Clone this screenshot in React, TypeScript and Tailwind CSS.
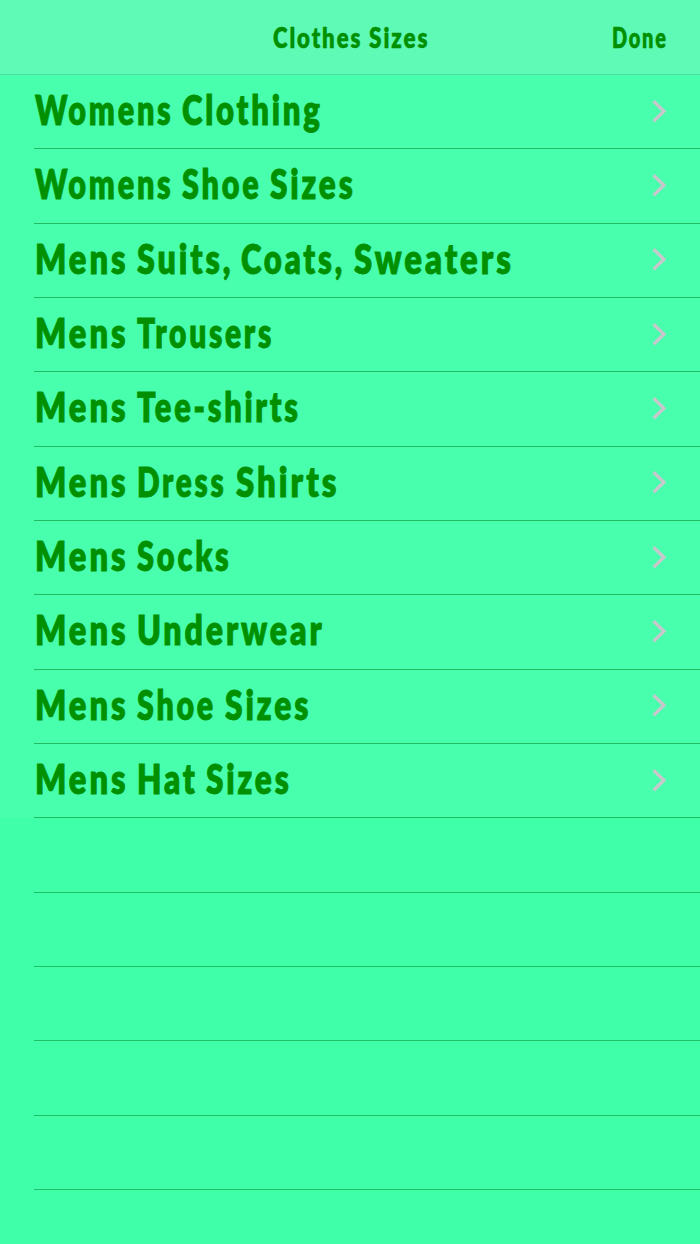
import { useLayoutEffect, useRef } from "react";

type WordBox = [text: string, start: number, end: number];

const rows: WordBox[][] = [
  [["Womens", 34.5, 170.5], ["Clothing", 181.5, 319.5]],
  [["Womens", 34.5, 170.5], ["Shoe", 181.5, 258.5], ["Sizes", 270, 352.5]],
  [["Mens", 34.5, 125.5], ["Suits,", 136.5, 230], ["Coats,", 240.5, 342], ["Sweaters", 354, 510.5]],
  [["Mens", 34.5, 125.5], ["Trousers", 137, 271]],
  [["Mens", 34.5, 125.5], ["Tee-shirts", 137, 298]],
  [["Mens", 34.5, 125.5], ["Dress", 136.5, 223.5], ["Shirts", 235.5, 336]],
  [["Mens", 34.5, 125.5], ["Socks", 137, 228.5]],
  [["Mens", 34.5, 125.5], ["Underwear", 136.5, 321.5]],
  [["Mens", 34.5, 125.5], ["Shoe", 137, 213.5], ["Sizes", 225, 308]],
  [["Mens", 34.5, 125.5], ["Hat", 136.5, 194.5], ["Sizes", 206, 288.5]],
];

const emptyRows = [0, 1, 2, 3, 4, 5];

// Condenses a word horizontally so that it fills the given width.
function Word({ text, width }: { text: string; width: number }) {
  const ref = useRef<HTMLSpanElement>(null);
  useLayoutEffect(() => {
    const el = ref.current;
    if (!el) return;
    const spacing = parseFloat(getComputedStyle(el).letterSpacing) || 0;
    el.style.transform = `scaleX(${width / (el.offsetWidth - spacing)})`;
  }, [width]);
  return (
    <span className="block shrink-0" style={{ width }}>
      <span ref={ref} className="inline-block origin-left whitespace-nowrap">
        {text}
      </span>
    </span>
  );
}

function Label({ words, origin }: { words: WordBox[]; origin: number }) {
  return (
    <span className="flex whitespace-pre">
      {words.map(([text, start, end], i) => {
        const gap = start - (i === 0 ? origin : words[i - 1][2]);
        return (
          <span key={i} className="flex shrink-0">
            <span className="block overflow-hidden" style={{ width: gap }}>
              {i > 0 ? " " : ""}
            </span>
            <Word text={text} width={end - start} />
          </span>
        );
      })}
    </span>
  );
}

function Chevron() {
  return (
    <svg className="h-6 w-4 shrink-0" viewBox="0 0 16 24" fill="none" stroke="#c7c7cc" strokeWidth="3.3">
      <path d="M2.6 1.2 L12.9 11.2 L2.6 21.2" />
    </svg>
  );
}

export default function App() {
  return (
    <div className="flex h-[1244px] w-[700px] flex-col overflow-hidden bg-[#40ffa9] font-['Marker_Felt','Lato',sans-serif] font-extrabold text-[#009000]">
      <header className="flex h-[75px] shrink-0 items-center justify-between border-b border-[#4cdd98] bg-[#5ffab5] pr-[34px] pl-[273px] text-[29px] leading-[40px] tracking-[2.5px] [-webkit-text-stroke:0.4px_#009000]">
        <h1>
          <Label words={[["Clothes", 273, 360.5], ["Sizes", 369, 427.5]]} origin={273} />
        </h1>
        <button className="block">
          <Label words={[["Done", 612, 666]]} origin={612} />
        </button>
      </header>
      <ul className="flex shrink-0 flex-col bg-[#48ffae] pl-[34px]">
        {rows.map((words, i) => (
          <li
            key={i}
            className="flex h-[74.33px] items-center justify-between border-b border-[#20bd60] pr-[33px] text-[41.5px] leading-[60px] tracking-[3.7px] [-webkit-text-stroke:0.8px_#009000]"
          >
            <div className="pb-[5px]">
              <Label words={words} origin={34} />
            </div>
            <Chevron />
          </li>
        ))}
      </ul>
      <div className="flex flex-col pl-[34px]">
        {emptyRows.map((i) => (
          <div key={i} className="h-[74.33px] shrink-0 border-b border-[#1ec166]" />
        ))}
      </div>
    </div>
  );
}
